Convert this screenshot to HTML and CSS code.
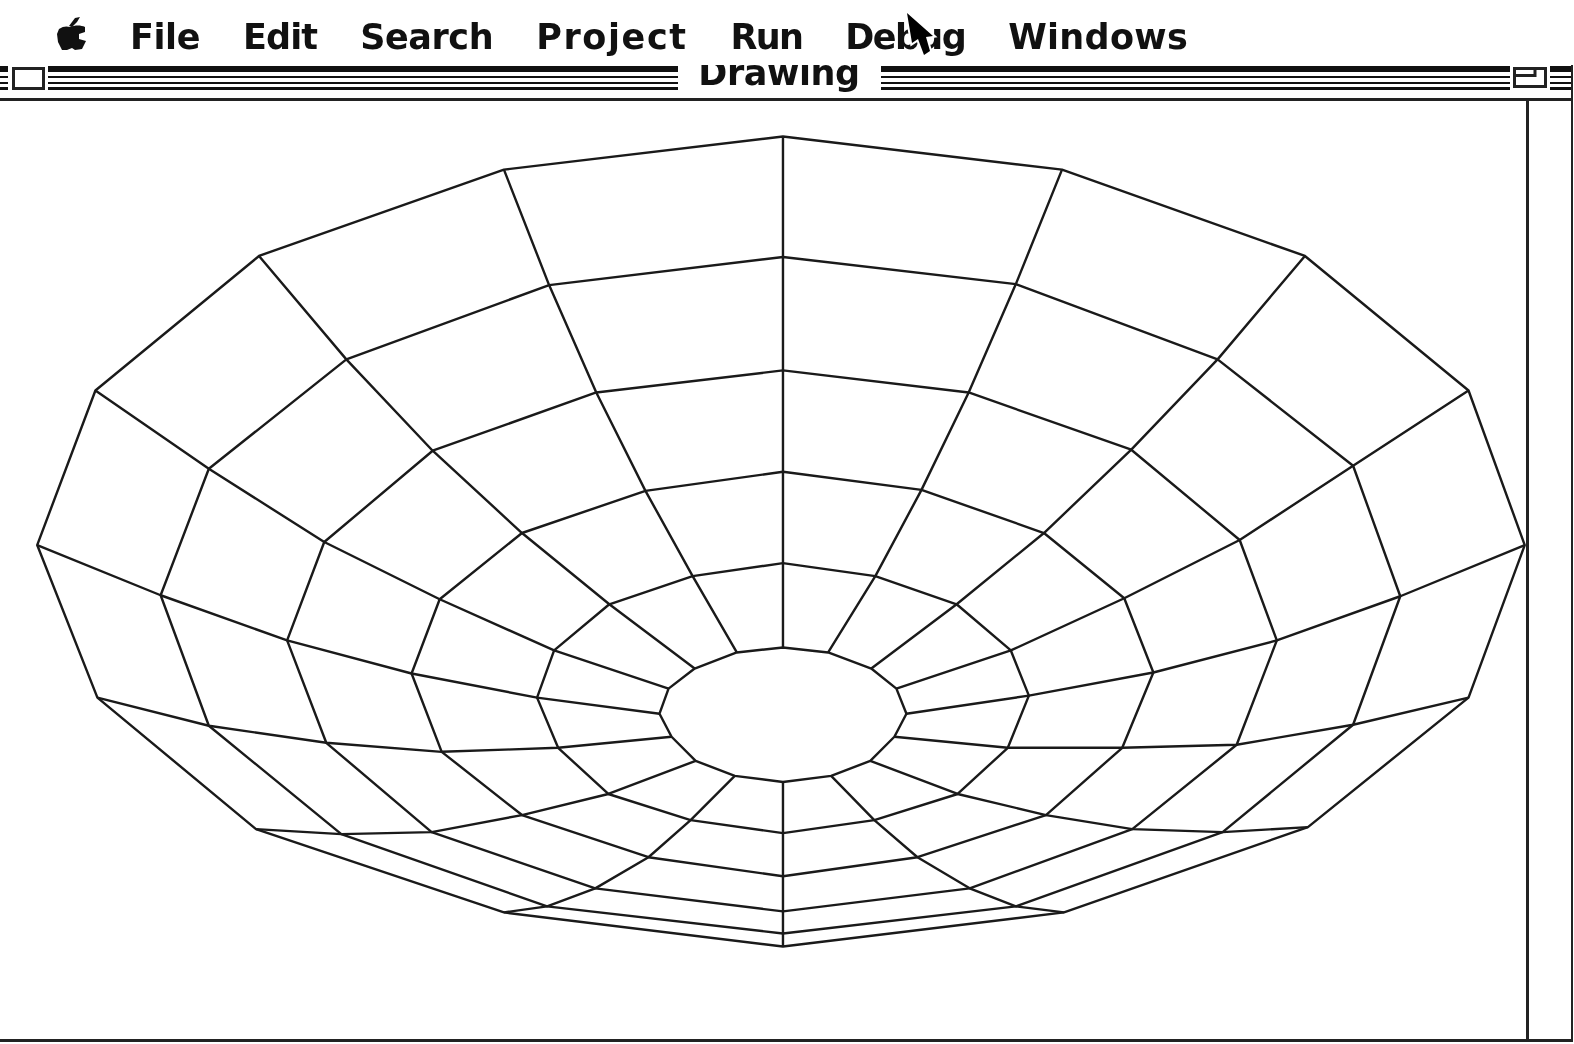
FILE: index.html
```html
<!DOCTYPE html>
<html lang="en">
<head>
    <meta charset="UTF-8">
    <title>Drawing</title>
    <link rel="stylesheet" href="styles.css">
</head>
<body>
    <header class="menubar">
        <svg class="apple" viewBox="0 0 29 35">
            <path d="M12 9L18 1L23 0L20 5L15 10Z"/>
            <path d="M2 12C6 9 10 9 13 10C18 8 24 8 28 10V15L22 17V22L29 24L25 32L18 33L15 31L10 33L5 33L1 25L0 17Z"/>
        </svg>
        <nav class="menus">
            <span>File</span>
            <span class="menu-edit">Edit</span>
            <span>Search</span>
            <span class="menu-project">Project</span>
            <span class="menu-run">Run</span>
            <span class="menu-debug">Debug</span>
            <span class="menu-windows">Windows</span>
        </nav>
    </header>

    <main class="window">
        <div class="titlebar">
            <div class="stripes stripes-end"></div>
            <div class="close-box"></div>
            <div class="stripes"></div>
            <div class="title"><span>Drawing</span></div>
            <div class="stripes"></div>
            <svg class="zoom-box" viewBox="0 0 34 21">
                <path d="M1.500 1.500H32.500V19.500H1.500ZM1.500 8.500H22V1.500"/>
            </svg>
            <div class="stripes stripes-end stripes-right"></div>
        </div>
        <div class="content">
            <svg class="drawing" viewBox="0 100.600 1520.200 934.500">
                <!-- rings, outer to inner -->
                <polygon points="780,136 1058,169 1300,255 1463,389 1519,543 1463,695 1303,824 1060,909 780,943 502,909 255,826 97,695 37,543 95,389 258,255 502,169"/>
                <polygon points="780,256 1012,283 1213,358 1348,464 1395,594 1348,722 1218,829 1012,903 780,930 545,903 340,831 208,723 160,593 208,467 345,358 547,284"/>
                <polygon points="780,369 965,391 1127,448 1235,538 1272,638 1232,742 1128,826 966,885 780,908 593,885 430,829 325,740 286,638 323,540 431,449 594,391"/>
                <polygon points="780,470 918,488 1040,531 1120,596 1149,670 1118,745 1042,812 914,854 780,873 646,854 520,812 440,749 410,671 438,597 520,531 643,489"/>
                <polygon points="780,561 872,574 953,602 1007,648 1025,693 1004,745 954,791 871,817 780,830 688,817 606,791 556,745 535,695 552,648 607,602 690,574"/>
                <polygon points="780,645 825,650 868,666 893,686 903,711 891,734 867,758 828,773 780,779 732,773 693,758 669,734 657,711 666,686 692,666 734,650"/>
                <!-- spokes, clockwise from the top -->
                <polyline points="780,136 780,256 780,369 780,470 780,561 780,645"/>
                <polyline points="1058,169 1012,283 965,391 918,488 872,574 825,650"/>
                <polyline points="1300,255 1213,358 1127,448 1040,531 953,602 868,666"/>
                <polyline points="1463,389 1348,464 1235,538 1120,596 1007,648 893,686"/>
                <polyline points="1519,543 1395,594 1272,638 1149,670 1025,693 903,711"/>
                <polyline points="1463,695 1348,722 1232,742 1118,745 1004,745 891,734"/>
                <polyline points="1303,824 1218,829 1128,826 1042,812 954,791 867,758"/>
                <polyline points="1060,909 1012,903 966,885 914,854 871,817 828,773"/>
                <polyline points="780,943 780,930 780,908 780,873 780,830 780,779"/>
                <polyline points="502,909 545,903 593,885 646,854 688,817 732,773"/>
                <polyline points="255,826 340,831 430,829 520,812 606,791 693,758"/>
                <polyline points="97,695 208,723 325,740 440,749 556,745 669,734"/>
                <polyline points="37,543 160,593 286,638 410,671 535,695 657,711"/>
                <polyline points="95,389 208,467 323,540 438,597 552,648 666,686"/>
                <polyline points="258,255 345,358 431,449 520,531 607,602 692,666"/>
                <polyline points="502,169 547,284 594,391 643,489 690,574 734,650"/>
            </svg>
            <div class="scrollbar"></div>
        </div>
    </main>

    <svg class="cursor" viewBox="0 0 30 46">
        <path d="M2 2L7 32L13 28L19 44L25 40L21 26L28 25Z"/>
    </svg>
</body>
</html>
```

FILE: styles.css
```css
body {
    margin: 0;
    width: 1574px;
    height: 1044px;
    overflow: hidden;
    background-color: #fff;
    color: #111;
    font-family: "DejaVu Sans", sans-serif;
    font-weight: bold;
    filter: blur(0.6px);
}

.menubar {
    display: flex;
    align-items: flex-start;
    height: 65px;
    padding: 17px 0 0 57px;
    box-sizing: border-box;
}

.apple {
    width: 29px;
    height: 35px;
    fill: #111;
}

.menus {
    display: flex;
    gap: 43px;
    margin-left: 44px;
    font-size: 35px;
    line-height: 40px;
    letter-spacing: -0.4px;
}

.menu-edit {
    letter-spacing: -0.9px;
}

.menu-project {
    letter-spacing: 1.6px;
}

.menu-run {
    letter-spacing: -1.7px;
}

.menu-debug {
    letter-spacing: -1.6px;
}

.menu-windows {
    letter-spacing: 0.3px;
}

.window {
    width: 1573px;
    height: 977px;
    border-right: 2px solid #222;
    border-bottom: 3px solid #222;
    box-sizing: border-box;
    display: flex;
    flex-direction: column;
}

.titlebar {
    display: flex;
    align-items: flex-start;
    height: 36px;
    border-bottom: 3px solid #222;
    box-sizing: border-box;
}

.stripes {
    flex: 1;
    height: 24px;
    margin-top: 1px;
    background:
        linear-gradient(#111, #111) 0 0 / 100% 6px no-repeat,
        linear-gradient(#111, #111) 0 10px / 100% 2px no-repeat,
        linear-gradient(#111, #111) 0 16px / 100% 2px no-repeat,
        linear-gradient(#111, #111) 0 21px / 100% 3px no-repeat;
}

.stripes-end {
    flex: none;
    width: 8px;
}

.stripes-right {
    width: 21px;
}

.close-box {
    width: 33px;
    height: 23px;
    margin: 2px 3px 0 4px;
    border: 3px solid #222;
    box-sizing: border-box;
}

.title {
    width: 203px;
    height: 32px;
    overflow: hidden;
    text-align: center;
    font-size: 35px;
    line-height: 32px;
    letter-spacing: -0.4px;
}

.title span {
    position: relative;
    top: -8px;
}

.zoom-box {
    width: 34px;
    height: 21px;
    margin: 2px 3px 0 3px;
    fill: none;
    stroke: #222;
    stroke-width: 3;
}

.content {
    flex: 1;
    display: flex;
    min-height: 0;
}

.drawing {
    width: 1526px;
    height: 938px;
    overflow: visible;
    fill: none;
    stroke: #1a1a1a;
    stroke-width: 2.4;
    stroke-linejoin: round;
}

.scrollbar {
    flex: 1;
    border-left: 3px solid #222;
}

.cursor {
    position: absolute;
    left: 905px;
    top: 11px;
    width: 30px;
    height: 46px;
    overflow: visible;
    fill: #000;
    stroke: #fff;
    stroke-width: 4;
    paint-order: stroke;
}
```
